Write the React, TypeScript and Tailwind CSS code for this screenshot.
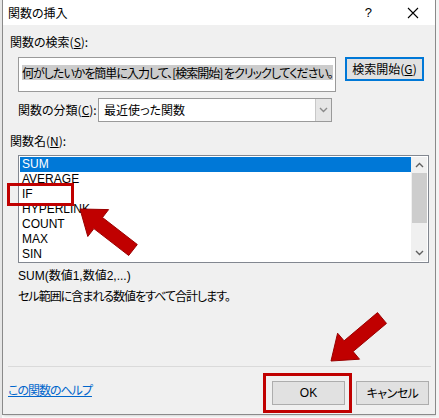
import React from 'react';

const JP = "font-['Noto_Sans_CJK_JP',sans-serif] [font-feature-settings:'palt']";
const LAT = "font-['Liberation_Sans','Noto_Sans_CJK_JP',sans-serif]";

const FUNCS = ['SUM', 'AVERAGE', 'IF', 'HYPERLINK', 'COUNT', 'MAX', 'SIN'];

// polygon for a fat annotation arrow: tip + direction towards the tail
function arrow(tx: number, ty: number, dx: number, dy: number) {
  const L = Math.hypot(dx, dy);
  const ux = dx / L, uy = dy / L;
  const nx = -uy, ny = ux;
  const H = 23, W = 17, w = 7;
  const p = (a: number, b: number) => `${(tx + ux * a + nx * b).toFixed(1)},${(ty + uy * a + ny * b).toFixed(1)}`;
  return [p(0, 0), p(H, W), p(H, w), p(L, w), p(L, -w), p(H, -w), p(H, -W)].join(' ');
}

function Chevron({ up, className }: { up?: boolean; className?: string }) {
  return (
    <svg width="9" height="6" viewBox="0 0 9 6" className={className}>
      <polyline
        points={up ? '1,5 4.5,1.5 8,5' : '1,1 4.5,4.5 8,1'}
        fill="none"
        stroke="currentColor"
        strokeWidth="1.4"
      />
    </svg>
  );
}

function Button({ children, className = '' }: { children: React.ReactNode; className?: string }) {
  return (
    <div
      className={`flex items-center justify-center bg-[#e1e1e1] text-[12px] text-black whitespace-nowrap ${JP} ${className}`}
    >
      {children}
    </div>
  );
}

export default function App() {
  return (
    <div className="relative w-[439px] h-[418px] overflow-hidden bg-white">
      {/* spreadsheet grid peeking out */}
      <div className="absolute left-0 top-0 w-[2px] h-full bg-[#e6e6e6]" />
      <div className="absolute right-0 top-0 w-[3px] h-full bg-[#f4f4f4]" />

      <div className="ml-[2px] w-[434px] h-[415px] flex flex-col border-x border-b border-[#8a8a8a] shadow-[1px_1px_3px_rgba(0,0,0,0.2)]">
        {/* title bar */}
        <div className="h-[25px] bg-white flex items-center shrink-0">
          <span className={`ml-[5px] text-[12px] text-black ${JP}`}>関数の挿入</span>
          <span className={`ml-auto mr-[35px] text-[13px] text-black ${LAT}`}>?</span>
          <svg width="12" height="12" viewBox="0 0 12 12" className="mr-[16px]">
            <path d="M1 1 L11 11 M11 1 L1 11" stroke="#000" strokeWidth="1.1" />
          </svg>
        </div>

        <div className="flex-1 bg-[#f0f0f0] flex flex-col px-[7px] text-black">
          <div className={`mt-[9px] h-[16px] leading-[16px] text-[12px] ${JP}`}>
            関数の検索(<u>S</u>):
          </div>

          <div className="mt-[7px] flex items-start">
            <div className="ml-[8px] w-[318px] h-[35px] bg-white border border-[#9a9a9a] pl-[3px] pt-[2px] overflow-hidden">
              <span className={`inline-block bg-[#cccccc] h-[15px] leading-[15px] text-[12px] tracking-[-1px] whitespace-nowrap ${JP}`}>
                何がしたいかを簡単に入力して、[検索開始] をクリックしてください。
              </span>
            </div>
            <Button className="ml-[9px] w-[79px] h-[24px] border-2 border-[#0078d7]">
              検索開始(<u>G</u>)
            </Button>
          </div>

          <div className="mt-[6px] flex items-center h-[24px]">
            <span className={`ml-[8px] text-[12px] ${JP}`}>
              関数の分類(<u>C</u>):
            </span>
            <div className="ml-auto mr-[96px] w-[234px] h-[24px] bg-white border border-[#9a9a9a] flex items-center">
              <span className={`ml-[5px] text-[12px] ${JP}`}>最近使った関数</span>
              <div className="ml-auto w-[16px] h-full bg-[#e6e6e6] border-l border-[#c8c8c8] flex items-center justify-center text-[#8a8a8a]">
                <Chevron />
              </div>
            </div>
          </div>

          <div className={`mt-[11px] h-[16px] leading-[16px] text-[12px] ${JP}`}>
            関数名(<u>N</u>):
          </div>

          <div className="mt-[6px] ml-[8px] w-[411px] h-[108px] bg-white border border-[#828790] flex p-[1px]">
            <div className="flex-1 flex flex-col">
              {FUNCS.map((f, i) => (
                <div
                  key={f}
                  className={`h-[15px] leading-[15px] pl-[2px] text-[12px] ${LAT} ${
                    i === 0 ? 'bg-[#0078d7] text-white' : 'text-black'
                  }`}
                >
                  {f}
                </div>
              ))}
            </div>
            <div className="w-[16px] h-full bg-[#f0f0f0] flex flex-col items-center">
              <div className="h-[16px] flex items-center justify-center text-[#606060]">
                <Chevron up />
              </div>
              <div className="w-[15px] h-[50px] bg-[#cdcdcd]" />
              <div className="flex-1" />
              <div className="h-[16px] flex items-center justify-center text-[#606060]">
                <Chevron />
              </div>
            </div>
          </div>

          <div className={`mt-[5px] ml-[8px] h-[17px] leading-[17px] text-[12px] ${LAT}`}>
            SUM(数値1,数値2,...)
          </div>
          <div className={`mt-[2px] ml-[8px] h-[17px] leading-[17px] text-[12px] tracking-[-1px] ${JP}`}>
            セル範囲に含まれる数値をすべて合計します。
          </div>

          <div className="mt-auto ml-[-2px] mr-[-3px] h-[1px] bg-[#dadada]" />

          <div className="h-[47px] flex items-start">
            <span
              className={`mt-[15px] ml-[-2px] text-[12px] leading-[16px] tracking-[-1px] text-[#0066cc] underline ${JP}`}
            >
              この関数のヘルプ
            </span>
            <Button className="ml-auto mt-[14px] w-[73px] h-[24px] border border-[#adadad]">
              <span className={LAT}>OK</span>
            </Button>
            <Button className="ml-[11px] mt-[14px] mr-[-1px] w-[73px] h-[24px] border border-[#adadad] tracking-[-0.5px]">
              キャンセル
            </Button>
          </div>
        </div>
      </div>

      {/* annotations */}
      <div className="absolute left-[7px] top-[183px] w-[67px] h-[23px] border-[3px] border-[#c00000]" />
      <div className="absolute left-[263px] top-[373px] w-[89px] h-[40px] border-[3px] border-[#c00000]" />
      <svg className="absolute left-0 top-0" width="439" height="418">
        <polygon points={arrow(80, 209, 53, 41)} fill="#c00000" stroke="#9a0000" strokeWidth="1" />
        <polygon points={arrow(331, 361, 51, -43)} fill="#c00000" stroke="#9a0000" strokeWidth="1" />
      </svg>
    </div>
  );
}
